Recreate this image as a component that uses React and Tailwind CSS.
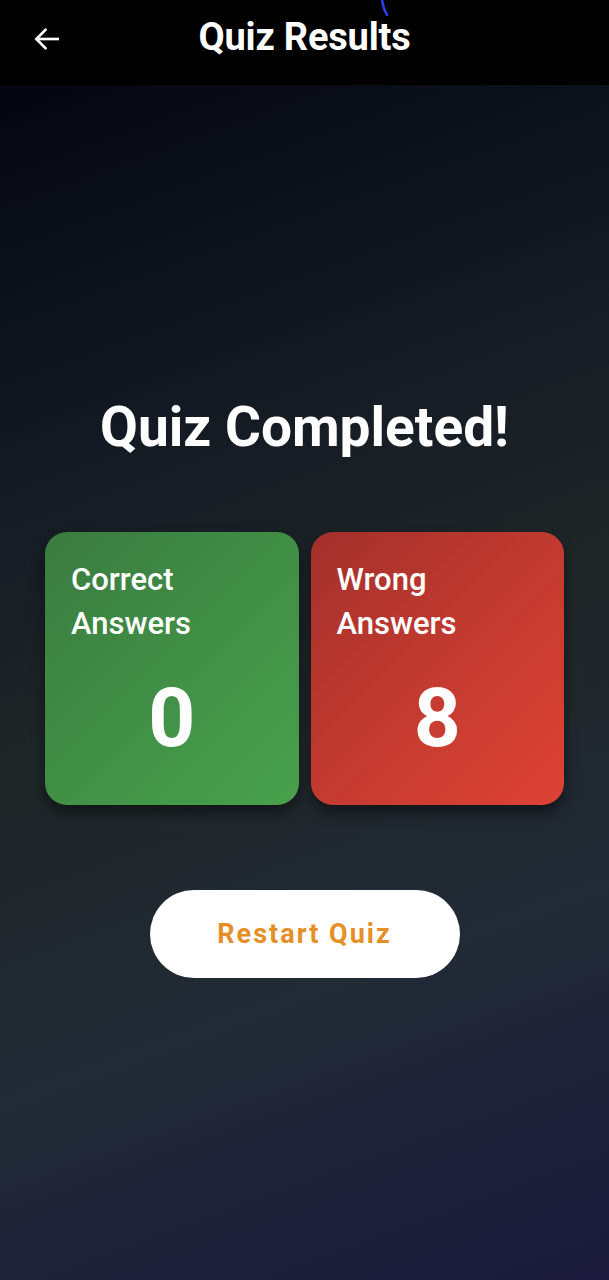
import React from 'react';

// --- Tarjeta de resultado ---
const ResultCard = ({ label, value, colors }) => (
    <div className={`flex flex-col h-[273px] rounded-[22px] px-[26px] pt-[26px] shadow-[0_8px_14px_rgba(0,0,0,0.45)] ${colors}`}>
        <p className="text-[31px] leading-[44px] font-medium text-white">{label}</p>
        <p className="mt-[24px] text-center text-[82px] leading-[96px] font-bold text-white">{value}</p>
    </div>
);

export default function App() {
    return (
        <div className="flex flex-col min-h-[1280px] font-['Roboto',sans-serif] bg-black">
            {/* --- Header --- */}
            <header className="relative flex items-center h-[85px] bg-black">
                <button className="flex items-center justify-center w-[40px] h-[40px] ml-[27px] -mt-[8px] text-white">
                    <svg width="32" height="32" viewBox="0 0 24 24" fill="none" stroke="currentColor" strokeWidth="2" strokeLinecap="square">
                        <path d="M20 12H5" />
                        <path d="M11 5l-7 7 7 7" strokeLinecap="round" strokeLinejoin="miter" />
                    </svg>
                </button>
                <h1 className="absolute left-0 right-0 top-[13px] text-center text-[38px] leading-[48px] font-bold text-white tracking-[-0.2px]">
                    Quiz Results
                </h1>
                {/* trazo azul perdido */}
                <svg className="absolute left-[378px] top-0" width="20" height="18" viewBox="0 0 20 18">
                    <path d="M4 0 C5 6 6 10 9 15" stroke="#2a3ff0" strokeWidth="2.5" fill="none" strokeLinecap="round" />
                </svg>
            </header>

            {/* --- Contenido --- */}
            <main className="flex-1 flex flex-col items-center bg-[linear-gradient(160deg,#04060f_0%,#131a23_28%,#1f2627_48%,#212a35_72%,#1b1a3c_100%)]">
                <h2 className="mt-[309px] text-[55px] leading-[66px] font-bold text-white">Quiz Completed!</h2>

                <div className="grid grid-cols-2 gap-[12px] w-full px-[45px] mt-[72px]">
                    <ResultCard
                        label={<>Correct<br />Answers</>}
                        value="0"
                        colors="bg-[linear-gradient(135deg,#3a7b40_0%,#418f46_50%,#48a14d_100%)]"
                    />
                    <ResultCard
                        label={<>Wrong<br />Answers</>}
                        value="8"
                        colors="bg-[linear-gradient(135deg,#a3302b_0%,#c33a30_50%,#de4234_100%)]"
                    />
                </div>

                <button className="mt-[85px] w-[310px] h-[88px] rounded-full bg-white text-[27px] font-bold tracking-[2px] text-[#e58f26]">
                    Restart Quiz
                </button>
            </main>
        </div>
    );
}
